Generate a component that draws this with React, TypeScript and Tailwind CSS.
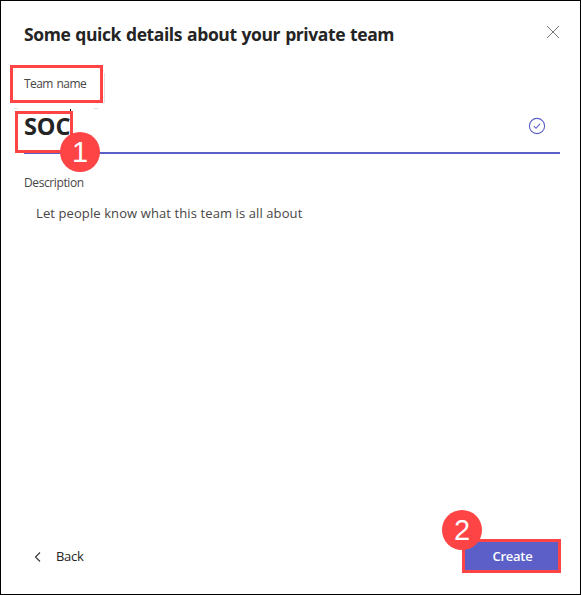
function Badge({ value, className }: { value: string; className: string }) {
  return (
    <span
      className={`absolute z-20 flex h-10 w-10 items-center justify-center rounded-full bg-[#fe4445] font-['Liberation_Sans',sans-serif] text-[29px] leading-none font-normal tracking-normal text-white ${className}`}
    >
      {value}
    </span>
  );
}

export default function App() {
  return (
    <main className="flex h-[595px] w-[581px] flex-col border border-black bg-white pt-5 pr-5 pb-[21px] pl-[23px] font-['Open_Sans','Noto_Sans',sans-serif] text-[#242424]">
      <header className="flex h-[26px] items-center justify-between">
        <h1 className="-mt-px text-[17.5px] leading-[26px] font-bold tracking-[-0.42px] [word-spacing:0.9px] whitespace-nowrap">
          Some quick details about your private team
        </h1>
        <button aria-label="Close" className="-mt-1 h-[14px] w-[14px]">
          <svg width="14" height="14" viewBox="0 0 14 14" fill="none" stroke="#666" strokeWidth="0.9">
            <path d="M1 1 13 13M13 1 1 13" />
          </svg>
        </button>
      </header>

      <div className="relative mt-[27px] h-5">
        <label className="block text-[12px] leading-5 tracking-[-0.55px] [word-spacing:1px] whitespace-nowrap text-[#484644]">
          Team name
        </label>
        <span className="absolute top-[-9px] left-[-14px] h-[38px] w-[93px] border-3 border-[#fe4445]" />
        <span className="absolute top-[-1px] left-[80px] h-[30px] w-px bg-[#e1e1e1]" />
        <span className="absolute top-[34px] left-[-10px] h-px w-1 bg-[#dedede]" />
        <span className="absolute top-[34px] left-[70px] h-px w-1 bg-[#dedede]" />
      </div>

      <div className="relative mt-[15px] flex h-[45px] w-[536px] items-start justify-between border-b-2 border-[#5b5fc7]">
        <span className="mt-[2px] text-[23.5px] leading-[30px] font-bold tracking-[-0.1px] text-[#242424]">SOC</span>
        <svg className="mt-[8px] mr-[14px]" width="18" height="18" viewBox="0 0 18 18" fill="none" stroke="#5b5fc7">
          <circle cx="9" cy="9" r="7.6" strokeWidth="1.1" />
          <path d="m5.8 9.2 2.2 2.1 4-4.4" strokeWidth="1.1" />
        </svg>
        <span className="absolute top-0 left-[46px] h-3 w-px bg-black" />
        <span className="absolute top-[2px] left-[-9px] h-[42px] w-[58px] border-3 border-[#fe4445]" />
        <Badge value="1" className="top-[23px] left-[36px]" />
      </div>

      <label className="mt-[19px] h-5 text-[12px] leading-5 tracking-[-0.4px] text-[#484644]">Description</label>
      <p className="mt-[9px] pl-3 text-[13px] leading-[22px] tracking-[0.1px] whitespace-nowrap text-[#484644]">
        Let people know what this team is all about
      </p>

      <footer className="mt-auto flex h-[34px] items-center justify-between">
        <button className="flex items-center pl-[10px] text-[13px] leading-5">
          <svg className="mt-px" width="8" height="12" viewBox="0 0 8 12" fill="none" stroke="#333">
            <path d="M6 1.5 1.5 6 6 10.5" strokeWidth="1.1" />
          </svg>
          <span className="ml-[14px] tracking-[-0.3px]">Back</span>
        </button>
        <button className="relative -mr-px h-[34px] w-[99px] border-3 border-[#fe4445] bg-[#5b5fc7] text-[13px] leading-7 font-semibold tracking-[-0.25px] text-white">
          <span className="ml-[2px]">Create</span>
          <Badge value="2" className="top-[-32px] left-[-23px]" />
        </button>
      </footer>
    </main>
  );
}
